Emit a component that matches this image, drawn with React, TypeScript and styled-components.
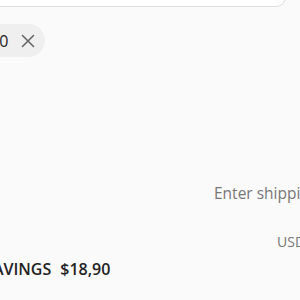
import React from "react";
import styled, { createGlobalStyle } from "styled-components";

const Global = createGlobalStyle`
  html, body { margin: 0; padding: 0; background: #fafafa; overflow: hidden; }
  body { width: 300px; height: 300px; font-family: "Open Sans", "Noto Sans", sans-serif; color: #222; }
`;

const Page = styled.div`
  margin-left: -70px;
  width: 600px;
  display: flex;
  flex-direction: column;
`;

const SearchBox = styled.div`
  margin-top: -40px;
  height: 47px;
  width: 356px;
  background: #ffffff;
  border: 1px solid #dcdcdc;
  border-radius: 10px;
  box-sizing: border-box;
`;

const ChipRow = styled.div`
  display: flex;
  margin-top: 17px;
`;

const Chip = styled.div`
  display: flex;
  align-items: center;
  gap: 13px;
  height: 33px;
  padding: 0 10px 0 14px;
  margin-left: -4px;
  border-radius: 17px;
  background: #efefef;
  font-size: 16px;
  color: #222;
`;

const Close = styled.svg`
  width: 14px;
  height: 14px;
  display: block;
`;

const Label = styled.div`
  margin-top: 70px;
  font-size: 16px;
  line-height: 20px;
  color: #222;
`;

const RightRow = styled.div<{ $top: number; $size: number; $left: number }>`
  margin-top: ${(p) => p.$top}px;
  padding-left: ${(p) => p.$left}px;
  font-size: ${(p) => p.$size}px;
  line-height: 20px;
  color: #777;
  white-space: nowrap;
`;

const Savings = styled.div`
  margin-top: 7px;
  display: flex;
  gap: 9px;
  font-size: 16px;
  font-weight: 600;
  line-height: 20px;
  color: #222;
`;

export default function App() {
  return (
    <>
      <Global />
      <Page>
        <SearchBox />
        <ChipRow>
          <Chip>
            $0 - $100
            <Close viewBox="0 0 14 14">
              <path d="M1.5 1.5 L12.5 12.5 M12.5 1.5 L1.5 12.5" stroke="#666" strokeWidth="1.6" strokeLinecap="round" />
            </Close>
          </Chip>
        </ChipRow>
        <Label>Discount</Label>
        <RightRow $top={36} $size={15.5} $left={284}>Enter shipping address</RightRow>
        <RightRow $top={29} $size={14} $left={347}>USD</RightRow>
        <Savings>
          <span>TOTAL SAVINGS</span>
          <span>$18,90</span>
        </Savings>
      </Page>
    </>
  );
}
